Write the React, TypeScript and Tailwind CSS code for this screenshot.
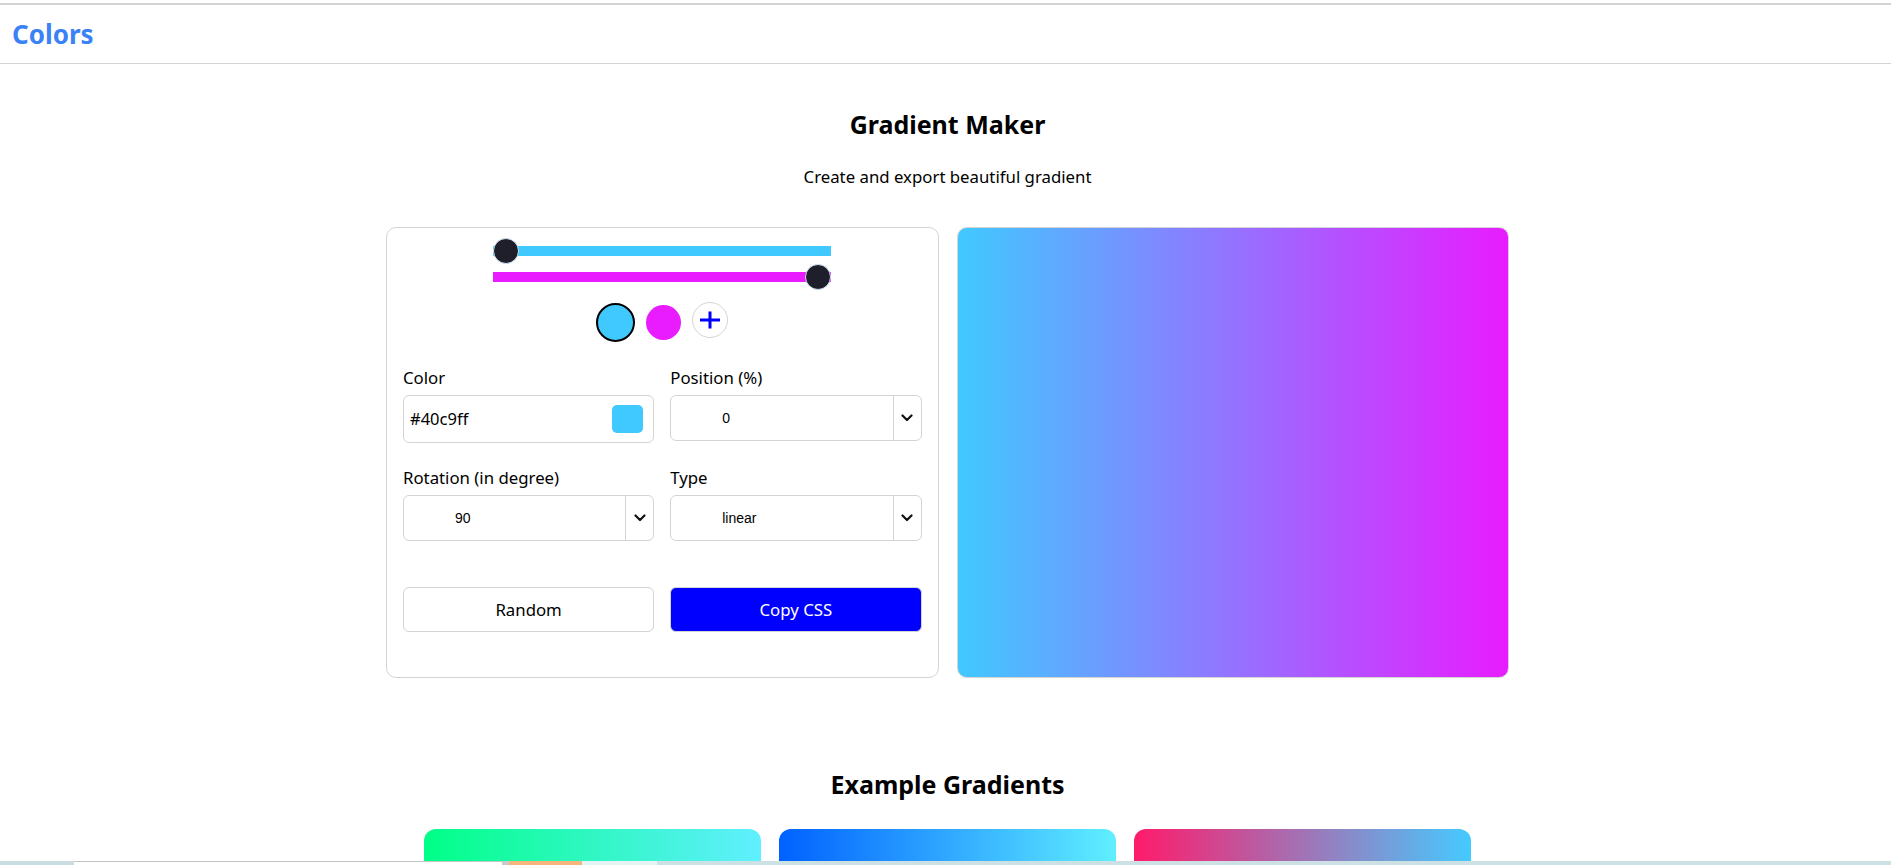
import React from 'react';

const Chevron: React.FC = () => (
  <svg width="12" height="8" viewBox="0 0 12 8" fill="none">
    <path d="M1.5 1.5 6 6l4.5-4.5" stroke="#111" strokeWidth="2.2" strokeLinecap="round" strokeLinejoin="round" />
  </svg>
);

const PlusIcon: React.FC = () => (
  <svg width="22" height="20" viewBox="0 0 22 20" fill="none">
    <path d="M1 10h20M11 1.5v17" stroke="#0000ff" strokeWidth="3" />
  </svg>
);

const SelectBox: React.FC<{ value: string; className?: string }> = ({ value, className }) => (
  <div className={`flex h-[46px] rounded-[6px] border border-[#d4d4d4] bg-white ${className ?? ''}`}>
    <div className="flex flex-1 items-center pl-[51px] font-['Liberation_Sans',Arial,sans-serif] text-[14px] text-black">
      {value}
    </div>
    <div className="flex w-[28px] items-center justify-center border-l border-[#d4d4d4]">
      <Chevron />
    </div>
  </div>
);

const Slider: React.FC<{ color: string; end?: boolean }> = ({ color, end }) => (
  <div className="relative flex h-[26px] w-[338px] items-center">
    <div className="h-[10px] w-full" style={{ background: color }} />
    <div
      className={`absolute top-0 h-[26px] w-[26px] rounded-full border border-[#cfe6f4] bg-[#1f1e2b] ${end ? 'right-0' : 'left-0'}`}
    />
  </div>
);

const EXAMPLES = [
  'bg-[linear-gradient(90deg,#00ff87_0%,#60efff_100%)]',
  'bg-[linear-gradient(90deg,#0061ff_0%,#60efff_100%)]',
  'bg-[linear-gradient(90deg,#ff1b6b_0%,#45caff_100%)]',
];

export default function App() {
  return (
    <div className="min-h-screen bg-white font-['Noto_Sans',sans-serif] text-black">
      {/* Top bar */}
      <header className="pt-[3px]">
        <div className="flex h-[61px] items-center border-t-2 border-b border-[#d4d4d4] px-[12px]">
          <span className="text-[26px] font-bold leading-none text-[#3b82f6]">Colors</span>
        </div>
      </header>

      <main className="flex flex-col items-center pb-[120px] pl-[4px]">
        <h2 className="mt-[42px] text-[25px] font-bold leading-[36px]">Gradient Maker</h2>
        <p className="mt-[23px] text-[16.8px] leading-[24px]">Create and export beautiful gradient</p>

        <div className="mt-[38px] grid w-[1123px] grid-cols-2 gap-[18px]">
          {/* Controls */}
          <div className="flex flex-col rounded-[10px] border border-[#d4d4d4] px-[16px] pt-[10px] pb-[45px]">
            <div className="flex flex-col items-center">
              <Slider color="#40c9ff" />
              <Slider color="#e81cff" end />
            </div>

            <div className="mt-[12px] flex h-[40px] items-center justify-center gap-[11px]">
              <div className="h-[39px] w-[39px] rounded-full border-2 border-black bg-[#40c9ff]" />
              <div className="h-[35px] w-[35px] rounded-full bg-[#e81cff]" />
              <div className="mb-[4px] flex h-[36px] w-[36px] items-center justify-center rounded-full border border-[#d4d4d4] bg-white">
                <PlusIcon />
              </div>
            </div>

            <div className="mt-[25px] grid grid-cols-2 gap-x-[16px]">
              <div className="flex flex-col">
                <label className="text-[16.8px] leading-[22px]">Color</label>
                <div className="mt-[6px] flex h-[48px] items-center justify-between rounded-[6px] border border-[#d4d4d4] pl-[6px] pr-[10px]">
                  <span className="text-[16.5px]">#40c9ff</span>
                  <div className="h-[28px] w-[31px] rounded-[5px] bg-[#40c9ff]" />
                </div>
              </div>
              <div className="flex flex-col">
                <label className="text-[16.8px] leading-[22px]">Position (%)</label>
                <SelectBox value="0" className="mt-[6px]" />
              </div>
            </div>

            <div className="mt-[24px] grid grid-cols-2 gap-x-[16px]">
              <div className="flex flex-col">
                <label className="text-[16.8px] leading-[22px]">Rotation (in degree)</label>
                <SelectBox value="90" className="mt-[6px]" />
              </div>
              <div className="flex flex-col">
                <label className="text-[16.8px] leading-[22px]">Type</label>
                <SelectBox value="linear" className="mt-[6px]" />
              </div>
            </div>

            <div className="mt-[46px] grid grid-cols-2 gap-x-[16px]">
              <button className="h-[45px] rounded-[6px] border border-[#d4d4d4] bg-white text-[16.8px] text-black">
                Random
              </button>
              <button className="h-[45px] rounded-[6px] border border-[#d4d4d4] bg-[#0000ff] text-[16.8px] text-white">
                Copy CSS
              </button>
            </div>
          </div>

          {/* Preview */}
          <div className="rounded-[10px] border border-[#d4d4d4] bg-[linear-gradient(90deg,#40c9ff_0%,#e81cff_100%)]" />
        </div>

        <h2 className="mt-[88px] text-[25px] font-bold leading-[36px]">Example Gradients</h2>
        <div className="mt-[27px] grid w-[1047px] grid-cols-3 gap-[18px]">
          {EXAMPLES.map((bg) => (
            <div key={bg} className={`h-[200px] rounded-[12px] ${bg}`} />
          ))}
        </div>
      </main>

      {/* bottom strip */}
      <div className="fixed bottom-0 left-0 right-0 flex h-[4px]">
        <div className="w-[74px] bg-[#c9dde2]" />
        <div className="w-[428px] border-t border-[#c4c4c4] bg-white" />
        <div className="w-[7px] bg-[#c9c9c9]" />
        <div className="w-[73px] bg-[#f4b67c]" />
        <div className="w-[75px] bg-[#e6f3f4]" />
        <div className="flex-1 bg-[#cde0e4]" />
      </div>
    </div>
  );
}
